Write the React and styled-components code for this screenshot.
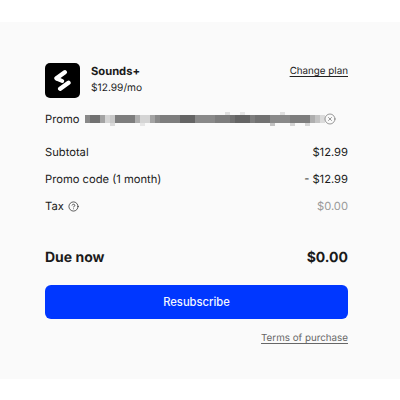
import styled, { createGlobalStyle } from "styled-components";
import { CircleHelp, CircleX } from "lucide-react";

const GlobalStyle = createGlobalStyle`
  html, body {
    margin: 0;
    background: #fff;
    font-family: "Inter", "Liberation Sans", sans-serif;
    text-rendering: geometricPrecision;
  }
`;

const Panel = styled.div`
  margin-top: 22px;
  height: 357px;
  box-sizing: border-box;
  padding: 41px 52px 0 45px;
  background: #fafafa;
  color: #1a1a1a;
  font-size: 11.2px;
`;

const PlanRow = styled.div`
  display: flex;
  align-items: flex-start;
  gap: 11px;
`;

const Logo = styled.div`
  display: flex;
  align-items: center;
  justify-content: center;
  width: 35px;
  height: 35px;
  border-radius: 5px;
  background: #000;
`;

const PlanInfo = styled.div`
  flex: 1;
  padding-top: 1px;
`;

const PlanName = styled.div`
  font-size: 11.2px;
  line-height: 14px;
  font-weight: 700;
`;

const PlanPrice = styled.div`
  margin-top: 3px;
  font-size: 10.2px;
  line-height: 14px;
`;

const TextLink = styled.a`
  font-size: 9.8px;
  line-height: 14px;
  color: ${(p) => p.$color || "#222"};
  text-decoration: underline;
  text-underline-offset: 2px;
`;

const ChangePlan = styled(TextLink)`
  padding-top: 2px;
`;

const PromoRow = styled.div`
  display: flex;
  align-items: center;
  height: 18px;
  margin-top: 12px;
  margin-bottom: 15px;
  line-height: 18px;
`;

const PromoLabel = styled.span`
  width: 40px;
  overflow: hidden;
  white-space: nowrap;
`;

const Mosaic = styled.svg`
  display: block;
  filter: blur(0.5px);
`;

const ClearIcon = styled(CircleX)`
  margin-left: -1px;
  color: #555;
`;

const SummaryRow = styled.div`
  display: flex;
  justify-content: space-between;
  align-items: center;
  height: 18px;
  margin-bottom: 9px;
  line-height: 18px;
`;

const Label = styled.span`
  display: flex;
  align-items: center;
  gap: 4px;
`;

const Muted = styled.span`
  color: #999;
`;

const DueRow = styled.div`
  display: flex;
  justify-content: space-between;
  align-items: center;
  height: 20px;
  margin-top: 32px;
  font-size: 14px;
  font-weight: 700;
`;

const PayButton = styled.button`
  display: block;
  width: 100%;
  height: 34px;
  margin-top: 18px;
  border: 0;
  border-radius: 6px;
  background: #0037ff;
  color: #f4f6ff;
  font-family: inherit;
  font-size: 11.2px;
  font-weight: 500;
`;

const Footer = styled.div`
  display: flex;
  justify-content: flex-end;
  margin-top: 13px;
`;

// gray levels of the blurred promo code, one per 5px cell
const cells = [
  45, 55, 55, 35, 15, 20, 50, 50, 50, 50, 30, 15, 15, 35, 45, 50, 50, 50, 50,
  60, 60, 60, 45, 45, 45, 45, 50, 50, 50, 55, 60, 60, 60, 50, 55, 55, 55, 45,
  45, 45, 45, 50, 50, 50, 50, 30, 22, 12,
];

// fainter bits that stick out above and below the strip
const specks = [
  { x: 25, y: 11, o: 0.12 },
  { x: 55, y: 11, o: 0.08 },
  { x: 140, y: 0, o: 0.1 },
  { x: 155, y: 0, o: 0.08 },
  { x: 185, y: 11, o: 0.22 },
  { x: 195, y: 0, o: 0.1 },
  { x: 205, y: 11, o: 0.15 },
  { x: 220, y: 11, o: 0.14 },
];

function App() {
  return (
    <>
      <GlobalStyle />
      <Panel>
        <PlanRow>
          <Logo>
            <svg width="17" height="23" viewBox="0 0 17 23" fill="none" stroke="#fff" strokeLinecap="round">
              <path d="M2.5 9.2 10.8 3.2" strokeWidth="4.4" />
              <path d="M2.8 9.6 8.2 12" strokeWidth="4" />
              <path d="M6.2 19.8 14.5 13.8" strokeWidth="4.4" />
            </svg>
          </Logo>
          <PlanInfo>
            <PlanName>Sounds+</PlanName>
            <PlanPrice>$12.99/mo</PlanPrice>
          </PlanInfo>
          <ChangePlan>Change plan</ChangePlan>
        </PlanRow>

        <PromoRow>
          <PromoLabel>Promo</PromoLabel>
          <Mosaic width="240" height="15" viewBox="0 0 240 15">
            {cells.map((v, i) => (
              <rect key={i} x={i * 5} y="3" width="5" height="8" fill={`rgba(0,0,0,${v / 100})`} />
            ))}
            {specks.map((s) => (
              <rect key={s.x} x={s.x} y={s.y} width="5" height="3" fill={`rgba(0,0,0,${s.o})`} />
            ))}
          </Mosaic>
          <ClearIcon size={12} strokeWidth={1.2} />
        </PromoRow>

        <SummaryRow>
          <span>Subtotal</span>
          <span>$12.99</span>
        </SummaryRow>
        <SummaryRow>
          <span>Promo code (1 month)</span>
          <span>- $12.99</span>
        </SummaryRow>
        <SummaryRow>
          <Label>
            Tax <CircleHelp size={11} strokeWidth={1.5} />
          </Label>
          <Muted>$0.00</Muted>
        </SummaryRow>

        <DueRow>
          <span>Due now</span>
          <span>$0.00</span>
        </DueRow>
        <PayButton>Resubscribe</PayButton>
        <Footer>
          <TextLink $color="#666">Terms of purchase</TextLink>
        </Footer>
      </Panel>
    </>
  );
}

export default App;
